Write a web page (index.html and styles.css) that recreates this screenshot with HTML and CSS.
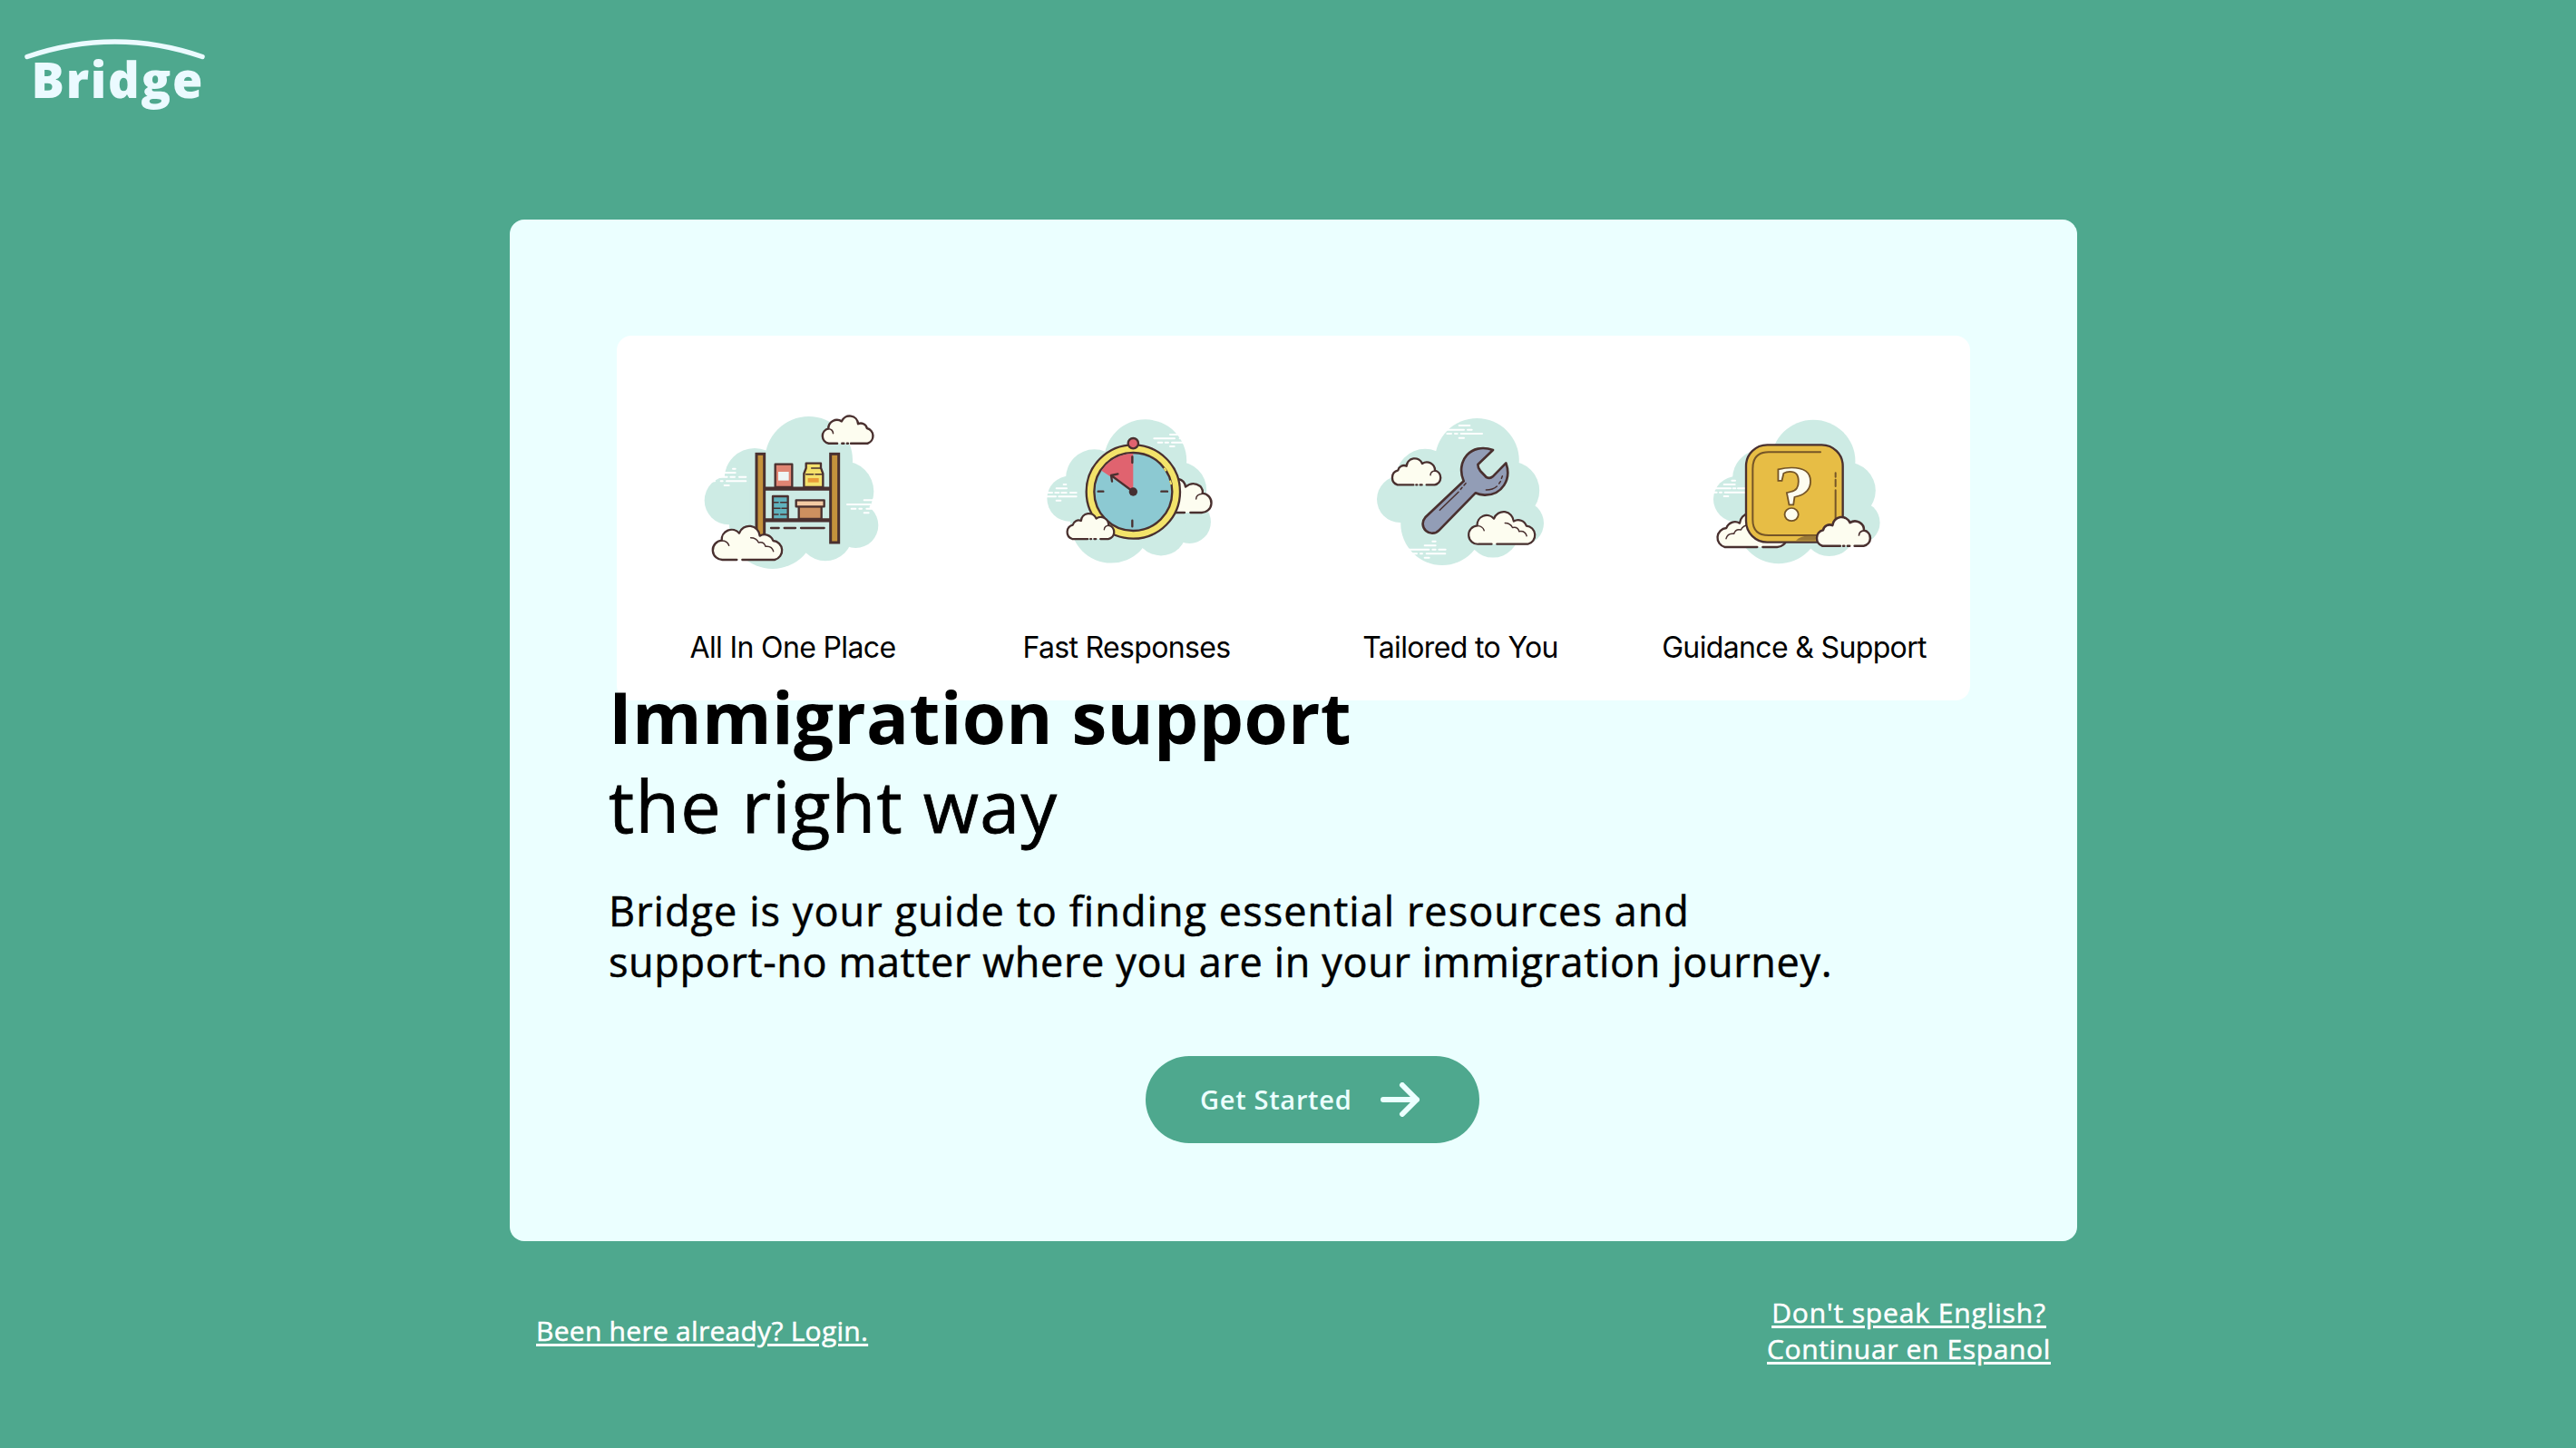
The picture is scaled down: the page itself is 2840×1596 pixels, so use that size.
FILE: index.html
```html
<!DOCTYPE html>
<html lang="en">
<head>
<meta charset="utf-8">
<title>Bridge</title>
<link rel="stylesheet" href="styles.css">
</head>
<body>
<header class="header">
  <svg class="logo" viewBox="0 0 260 120" role="img" aria-label="Bridge">
    <path class="logo-arch" d="M30 42.500Q127 9.500 223 42.500"/>
    <text class="logo-text" x="34.500" y="88" textLength="189">Bridge</text>
  </svg>
</header>

<main class="card">
  <section class="features">
    <div class="feature">
      <svg class="art" viewBox="12 0 660 600">
        <defs>
          <g id="blob" class="blob">
            <circle cx="395" cy="202" r="145"/><circle cx="216" cy="262" r="100"/>
            <circle cx="130" cy="335" r="80"/><circle cx="510" cy="305" r="100"/>
            <circle cx="550" cy="417" r="75"/><circle cx="275" cy="418" r="143"/>
            <circle cx="450" cy="445" r="90"/><rect x="200" y="240" width="300" height="200"/>
          </g>
          <g id="cloud-big">
            <path class="cloud-fill" d="M112 531A32 32 0 0 1 107 467A33 33 0 0 1 165 443A35 35 0 0 1 233 452A30 30 0 0 1 277 468A32 32 0 0 1 282 531Z"/>
            <path class="line" d="M157 531H112A32 32 0 0 1 107 467A33 33 0 0 1 165 443A35 35 0 0 1 233 452A30 30 0 0 1 277 468A32 32 0 0 1 282 531H175"/>
            <path class="line fine" d="M107 468Q126 468 131 484M203 458Q222 458 229 474Q247 470 252 487Q273 484 278 503"/>
          </g>
          <g id="cloud-small">
            <path class="cloud-fill" d="M122 283A25 25 0 0 1 124 235A20 20 0 0 1 152 221A27 27 0 0 1 204 213A27 27 0 0 1 246 236A24 24 0 0 1 245 283Z"/>
            <path class="line" d="M175 283H122A25 25 0 0 1 124 235A20 20 0 0 1 152 221A27 27 0 0 1 204 213A27 27 0 0 1 246 236A24 24 0 0 1 245 283H218M184 283h3M197 283h6"/>
            <path class="line fine" d="M231 251Q232 238 246 237"/>
          </g>
        </defs>
        <use href="#blob"/>
        <path class="wind" d="M144 230h8M118 243h34M92 257h33M136 257h14M165 257h22M60 271h24M104 271h6M123 271h64M116 285h15M578 334h30M522 348h76M536 362h14M562 362h8M586 362h30M578 376h15"/>
        <path class="shelf" d="M246 296H468M246 400H468"/>
        <rect class="post" x="222" y="181" width="26" height="290"/>
        <rect class="post" x="467" y="181" width="27" height="293"/>
        <rect class="line" fill="#e08573" x="284" y="215" width="56" height="76"/>
        <path fill="#eef5f5" d="M294 240h35v29h-35z"/>
        <path class="line" fill="#f4e16b" d="M386 212H435V227L442 246V291H379V246L386 228Z"/>
        <path class="line fine" d="M404 228H434M386 248h24M417 248h24"/>
        <path fill="#e89b38" d="M392 261h36v14h-36z"/>
        <path class="line" fill="#60b2bd" d="M276 321H326V397H276z"/>
        <path class="line fine" d="M278 341h16M302 341h22M278 361h22M306 361h18M278 381h16M302 381h22"/>
        <path class="line" fill="#cc9060" d="M362 354H437V396H362z"/>
        <path class="line" fill="#f3caa4" d="M353 334H446V355H353z"/>
        <path class="line" d="M270 426H296M314 426H351M369 426H446"/>
        <use href="#cloud-big"/>
        <use href="#cloud-small" transform="translate(717 -149) scale(-1.045 1.043)"/>
      </svg>
      <p class="feature-label">All In One Place</p>
    </div>
    <div class="feature">
      <svg class="art" viewBox="-24 0 660 600">
        <use href="#blob" transform="translate(-4 13.300) scale(.942)"/>
        <path class="wind" d="M450 117h42M397 130h68M482 130h30M410 143h14M434 143h10M456 143h65M450 156h14M98 282h8M74 295h34M30 309h30M70 309h12M91 309h16M120 309h20M40 322h32M82 322h58M74 335h14"/>
        <path class="cloud-fill" d="M440 375V280L481 264Q498 270 501 290Q525 270 550 288Q560 300 557 311A32 32 0 0 1 552 375Z"/>
        <path class="line" d="M478 264Q498 268 501 290Q525 270 550 288Q560 300 557 311A32 32 0 0 1 552 375H517M498 375H465"/>
        <path class="line fine" d="M536 330Q536 315 557 313"/>
        <circle class="line" fill="#f3e36a" cx="328" cy="306" r="155"/>
        <circle class="line" fill="#8cc9d2" cx="328" cy="306" r="129"/>
        <path stroke="#f3e36a" stroke-width="6" d="M430 227l7 11M450 269l4 13"/>
        <path fill="#e0636f" d="M328 306V180A126 126 0 0 0 223 236Z"/>
        <path class="line" d="M325 190V210M325 401V421M212 305H229M421 305H441M328 306L257 253M258 272L255 252L277 247"/>
        <circle cx="328" cy="306" r="14" fill="#452f31"/>
        <circle class="line" fill="#e0636f" cx="328" cy="146" r="17"/>
        <use href="#cloud-small" transform="translate(8 189) scale(.97 .965)"/>
      </svg>
      <p class="feature-label">Fast Responses</p>
    </div>
    <div class="feature">
      <svg class="art" viewBox="0 0 660 600">
        <use href="#blob" transform="translate(6 8) scale(.96 .964)"/>
        <path class="wind" d="M326 87h35M280 101h62M354 101h14M286 114h14M312 114h8M332 114h70M326 128h16M238 470h10M212 484h36M160 497h66M238 497h10M259 497h22M172 511h14M198 511h6M218 511h62M212 524h15"/>
        <path class="line wrench" d="M438 168L388 216Q388 228 396 237L416 258Q428 264 437 256L481 211C500 265 468 318 410 317Q393 316 380 310L260 433A31 31 0 0 1 214 391L341 271C313 205 365 142 438 168Z"/>
        <path class="line fine" d="M262 367L324 307M331 298l5-6M342 285l6-7M415 300Q438 300 451 288M458 279l5-7M466 262l3-8"/>
        <use href="#cloud-small"/>
        <use href="#cloud-big" transform="translate(283.400 -29) scale(.957)"/>
      </svg>
      <p class="feature-label">Tailored to You</p>
    </div>
    <div class="feature">
      <svg class="art" viewBox="-6 0 660 600">
        <use href="#blob" transform="translate(9 14.200) scale(.958 .944)"/>
        <path class="wind" d="M118 269h11M92 282h36M60 295h54M122 295h8M138 295h25M56 308h12M78 308h6M95 308h68M92 321h14"/>
        <use href="#cloud-big" transform="translate(377 -42) scale(-1 1)"/>
        <rect class="line" fill="#e7bd45" x="165" y="151" width="320" height="322" rx="70"/>
        <path class="line inset" d="M411 175H240Q187 175 187 230V398Q187 450 240 450H400M461 244v13M461 266v22M461 301V395"/>
        <path fill="#9b7a38" d="M330 467Q345 452 370 452H395V467Z"/>
        <text class="question" transform="translate(254 399) scale(1.090 1)" x="0" y="0">?</text>
        <use href="#cloud-small" transform="translate(282.500 175) scale(1.108 1.096)"/>
      </svg>
      <p class="feature-label">Guidance &amp; Support</p>
    </div>
  </section>

  <h1 class="title"><span class="title-strong">Immigration support</span><br><span class="title-light">the right way</span></h1>
  <p class="intro"><span class="intro-first">Bridge is your guide to finding essential resources and</span><br><span class="intro-second">support-no matter where you are in your immigration journey.</span></p>
  <button class="cta"><span class="cta-text">Get Started</span>
    <svg class="arrow" viewBox="0 0 44 38"><path d="M3 19H40M24 3L40 19L24 35"/></svg>
  </button>
</main>

<footer class="footer">
  <a class="link login">Been here already? Login.</a>
  <a class="link language"><span class="language-ask">Don't speak English?</span><br><span class="language-switch">Continuar en Espanol</span></a>
</footer>
</body>
</html>
```

FILE: styles.css
```css
* { box-sizing: border-box; }

body {
  margin: 0;
  height: 1596px;
  overflow: hidden;
  background: #4ea88e;
  color: #000;
  font-family: "Open Sans", "Noto Sans", sans-serif;
}

.header { height: 242px; padding-top: 20px; }
.logo { display: block; width: 260px; height: 120px; }
.logo-arch { fill: none; stroke: #ebfaff; stroke-width: 5.5; stroke-linecap: round; }
.logo-text { fill: #ebfaff; font-size: 54px; font-weight: 800; }

.card {
  display: flex;
  flex-direction: column;
  width: 1728px;
  height: 1126px;
  margin-left: 562px;
  padding: 128px 67px 0 109px;
  border-radius: 16px;
  background: #ebffff;
}

.features {
  display: grid;
  grid-template-columns: repeat(4, 368px);
  width: 1492px;
  height: 402px;
  margin-left: 9px;
  padding: 70px 10px 0;
  border-radius: 16px;
  background: #fff;
}
.feature { display: flex; flex-direction: column; align-items: center; gap: 54px; }
.art { width: 220px; height: 200px; flex: none; overflow: visible; }
.feature-label {
  margin: 0;
  font: 400 32px/40px Inter, "Liberation Sans", sans-serif;
  letter-spacing: -0.65px;
  white-space: nowrap;
}

.blob { fill: #cdebe4; }
.wind { fill: none; stroke: #fff; stroke-width: 6; stroke-linecap: round; }
.line { stroke: #49302f; stroke-width: 7; stroke-linecap: round; stroke-linejoin: round; }
path.line:not([fill]) { fill: none; }
.line.fine { stroke-width: 4.5; }
.cloud-fill { fill: #fdfdf0; }
.shelf { stroke: #49302f; stroke-width: 13; }
.post { fill: #c4923c; stroke: #49302f; stroke-width: 9; }
path.wrench.line { fill: #929db6; stroke-width: 8; }
.line.inset { stroke: #755527; stroke-width: 6; }
.question {
  font: 700 258px "Liberation Serif", serif;
  fill: #fdfdf0;
  stroke: #755527;
  stroke-width: 5;
}

.title { margin: -30px 0 0; font-size: 78px; line-height: 97px; font-weight: 400; white-space: nowrap; }
.title-strong { font-weight: 700; letter-spacing: 0.3px; }
.title-light { font-size: 79px; letter-spacing: 1.3px; -webkit-text-stroke: 0.8px #000; }
.intro { margin: 39px 0 0; font-size: 45px; line-height: 56px; white-space: nowrap; -webkit-text-stroke: 0.5px #000; }
.intro-first { letter-spacing: 1.06px; }
.intro-second { letter-spacing: 0.65px; }

.cta {
  display: flex;
  align-items: center;
  align-self: center;
  width: 368px;
  height: 96px;
  margin-top: 76px;
  padding: 0 0 0 60px;
  border: 0;
  border-radius: 48px;
  background: #4ea88e;
  color: #ebffff;
  font: 600 29px/40px "Open Sans", sans-serif;
}
.cta-text { width: 199px; text-align: left; white-space: nowrap; letter-spacing: 0.7px; }
.arrow { width: 44px; height: 38px; fill: none; stroke: #ebffff; stroke-width: 6; stroke-linecap: round; stroke-linejoin: round; }

.footer {
  display: flex;
  justify-content: space-between;
  align-items: center;
  width: 1670px;
  margin: 59px 0 0 591px;
  color: #fff;
  font-size: 30px;
  line-height: 40px;
  -webkit-text-stroke: 0.5px #fff;
}
.link { text-decoration: underline; text-decoration-thickness: 3px; text-underline-offset: 3px; white-space: nowrap; }
.login { letter-spacing: 0.27px; }
.language { text-align: center; }
.language-ask { letter-spacing: 0.88px; }
.language-switch { letter-spacing: 0.64px; }
```
